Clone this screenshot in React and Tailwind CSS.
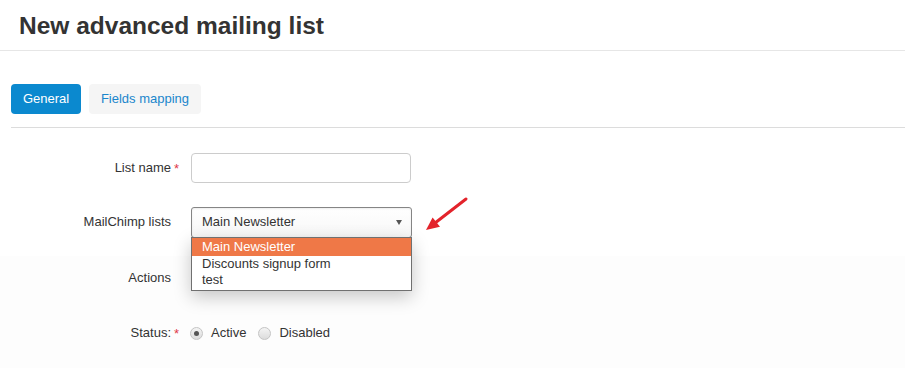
import React from "react";

const FONT = { fontFamily: '"Liberation Sans", Arial, sans-serif' };

function Label({ text, required }) {
  return (
    <div className="w-[171px] shrink-0 text-right text-[13px] text-[#333]">
      <span className="relative">
        {text}
        {required && (
          <span className="absolute left-full top-[-1px] ml-[3px] text-[#e0384a]">*</span>
        )}
      </span>
    </div>
  );
}

function Radio({ checked, label }) {
  return (
    <label className="flex items-center gap-[8px] text-[13px] text-[#333]">
      <span className="flex h-[13px] w-[13px] items-center justify-center rounded-full border border-[#c4c4c4] bg-gradient-to-b from-[#f4f4f4] to-[#dcdcdc]">
        {checked && <span className="h-[5px] w-[5px] rounded-full bg-[#555]" />}
      </span>
      {label}
    </label>
  );
}

export default function App() {
  const options = ["Main Newsletter", "Discounts signup form", "test"];

  return (
    <div style={FONT} className="relative h-[368px] w-[905px] overflow-hidden bg-white">
      {/* HEADER */}
      <div className="h-[51px] border-b border-[#e6e6e6] px-[19px] pt-[11px]">
        <h1 className="text-[24.5px] font-bold leading-[30px] text-[#333]">
          New advanced mailing list
        </h1>
      </div>

      {/* TABS */}
      <div className="ml-[11px] mt-[33px] flex gap-[8px] border-b border-[#dcdcdc] pb-[13px]">
        <button className="h-[30px] w-[70px] rounded-[4px] bg-[#0b89cf] text-[13px] text-white">
          General
        </button>
        <button className="h-[30px] w-[112px] rounded-[4px] bg-[#f5f5f5] text-[13px] text-[#1a86cc]">
          Fields mapping
        </button>
      </div>

      {/* FORM */}
      <div className="pt-[25px]">
        <div className="flex h-[30px] items-center gap-[20px]">
          <Label text="List name" required />
          <input className="h-[30px] w-[220px] rounded-[4px] border border-[#cccccc] bg-white" />
        </div>

        <div className="mt-[24px] flex h-[30px] items-center gap-[20px]">
          <Label text="MailChimp lists" />
          <div className="relative">
            <div className="flex h-[31px] w-[221px] items-center justify-between rounded-[3px] border border-[#858585] bg-gradient-to-b from-white to-[#f7f7f7] pl-[10px] pr-[9px] text-[13px] text-[#333] shadow-[inset_0_1px_2px_rgba(0,0,0,0.08)]">
              <span>Main Newsletter</span>
              <svg width="6" height="5" viewBox="0 0 6 5">
                <path d="M0 0 H6 L3 5 Z" fill="#555" />
              </svg>
            </div>
            {/* open dropdown */}
            <div className="absolute left-0 top-[30px] z-10 w-[221px] border border-[#707070] bg-white pb-[2px] text-[13px] text-[#333] shadow-[0_6px_18px_rgba(0,0,0,0.22)]">
              {options.map((o, i) => (
                <div
                  key={o}
                  className={
                    i === 0
                      ? "h-[18px] bg-[#ef7847] pl-[10px] leading-[18px] text-white"
                      : "h-[16px] pl-[10px] leading-[16px]"
                  }
                >
                  {o}
                </div>
              ))}
            </div>
          </div>
        </div>

        <div className="mt-[19px] bg-[#fdfdfd] pb-[30px] pt-[7px]">
          <div className="flex h-[30px] items-center gap-[20px]">
            <Label text="Actions" />
          </div>
          <div className="mt-[25px] flex h-[30px] items-center gap-[20px]">
            <Label text="Status:" required />
            <div className="-ml-[1px] flex items-center gap-[12px]">
              <Radio checked label="Active" />
              <Radio label="Disabled" />
            </div>
          </div>
        </div>
      </div>

      {/* annotation arrow */}
      <svg
        className="absolute left-[420px] top-[192px]"
        width="52"
        height="44"
        viewBox="0 0 52 44"
      >
        <line x1="46" y1="7" x2="15" y2="31" stroke="#e3232b" strokeWidth="3" strokeLinecap="round" />
        <path d="M6 38 L12.6 25.4 L20 34.8 Z" fill="#e3232b" />
      </svg>
    </div>
  );
}
